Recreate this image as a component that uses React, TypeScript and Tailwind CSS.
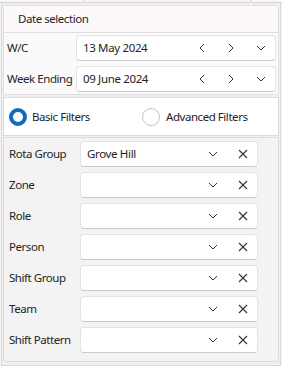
import React from 'react';

const font = { fontFamily: '"Noto Sans", "Open Sans", sans-serif' };

const Chevron = ({ dir }: { dir: 'left' | 'right' | 'down' }) => {
  const d =
    dir === 'left' ? 'M6 1 L2 5 L6 9' : dir === 'right' ? 'M3 1 L7 5 L3 9' : 'M1 3 L5 7 L9 3';
  return (
    <svg width="10" height="10" viewBox="0 0 10 10" fill="none" stroke="#333" strokeWidth="1">
      <path d={d} />
    </svg>
  );
};

const Cross = () => (
  <svg width="10" height="10" viewBox="0 0 10 10" fill="none" stroke="#333" strokeWidth="1.1">
    <path d="M1 1 L9 9 M9 1 L1 9" />
  </svg>
);

const DateRow = ({ label, value }: { label: string; value: string }) => (
  <div className="flex items-center h-[26px]">
    <span className="w-[72px] pl-[3px] text-[11.5px] tracking-[-0.45px] text-[#242424] whitespace-nowrap">{label}</span>
    <div className="flex items-center flex-1 h-full bg-white rounded-[4px] border border-[#e3e3e3] border-b-[#c9c9c9] pl-[6px]">
      <span className="flex-1 text-[11.5px] tracking-[-0.35px] text-[#242424]">{value}</span>
      <div className="flex items-center pr-[9px]">
        <Chevron dir="left" />
        <span className="ml-[18px]">
          <Chevron dir="right" />
        </span>
        <span className="ml-[20px]">
          <Chevron dir="down" />
        </span>
      </div>
    </div>
  </div>
);

const FilterRow = ({ label, value }: { label: string; value?: string }) => (
  <div className="flex items-center h-[26px]">
    <span className="w-[76px] pl-[5px] text-[11.5px] tracking-[-0.45px] text-[#242424] whitespace-nowrap">{label}</span>
    <div className="flex items-center w-[178px] h-full bg-white rounded-[4px] border border-[#e3e3e3] border-b-[#c9c9c9] pl-[6px]">
      <span className="flex-1 text-[11.5px] tracking-[-0.35px] text-[#242424]">{value}</span>
      <div className="flex items-center gap-[20px] pr-[9px]">
        <Chevron dir="down" />
        <Cross />
      </div>
    </div>
  </div>
);

const filters = [
  { label: 'Rota Group', value: 'Grove Hill' },
  { label: 'Zone' },
  { label: 'Role' },
  { label: 'Person' },
  { label: 'Shift Group' },
  { label: 'Team' },
  { label: 'Shift Pattern' },
];

export default function App() {
  return (
    <div className="w-[282px] h-[366px] bg-[#f5f5f5] overflow-hidden" style={font}>
      {/* tab remnants */}
      <div className="flex h-[3px]">
        <div className="w-[84px] border-b border-r border-[#d6d6d6] rounded-br-[3px] bg-[#f7f7f7]" />
        <div className="flex-1 border-b border-[#d6d6d6]" />
        <div className="w-[32px] border-b border-l border-[#d6d6d6] rounded-bl-[3px] bg-[#f7f7f7]" />
      </div>
      <div className="mx-[1px] h-[363px] border border-t-0 border-[#d9d9d9] bg-[#f0f0f0] px-[1px] pt-[2px] flex flex-col">
        {/* Date selection */}
        <div className="border border-[#e0e0e0] rounded-[3px] bg-[#fafafa]">
          <div className="h-[27px] flex items-center pl-[14px] bg-[#fcf8fc] border-b border-[#dedede] text-[11.5px] tracking-[-0.45px] text-[#242424]">
            Date selection
          </div>
          <div className="flex flex-col gap-[5px] pt-[2px] pb-[2px] pr-[2px]">
            <DateRow label="W/C" value="13 May 2024" />
            <DateRow label="Week Ending" value="09 June 2024" />
          </div>
        </div>
        {/* Radio */}
        <div className="mt-[2px] h-[39px] border border-[#dcdcdc] bg-white flex items-center pl-[5px] text-[11.5px] tracking-[-0.45px] text-[#242424]">
          <div className="flex items-center w-[133px]">
            <span className="w-[18px] h-[18px] rounded-full border-[4px] border-[#0f6cbd]" />
            <span className="ml-[5px]">Basic Filters</span>
          </div>
          <div className="flex items-center">
            <span className="w-[18px] h-[18px] rounded-full border border-[#c4c4c4] bg-white" />
            <span className="ml-[6px]">Advanced Filters</span>
          </div>
        </div>
        {/* Filters */}
        <div className="mt-[1px] flex-1 mb-[3px] border border-[#dcdcdc] rounded-b-[4px] bg-[#f3f3f3] pt-[3px] flex flex-col gap-[5px]">
          {filters.map((f) => (
            <FilterRow key={f.label} label={f.label} value={f.value} />
          ))}
        </div>
      </div>
    </div>
  );
}
